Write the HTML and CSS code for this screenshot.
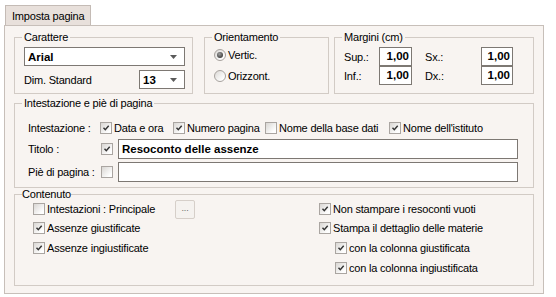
FILE: index.html
```html
<!DOCTYPE html>
<html lang="it">
<head>
<meta charset="utf-8">
<title>Imposta pagina</title>
<link rel="stylesheet" href="styles.css">
</head>
<body>
<div class="tabs"><div class="tab">Imposta pagina</div></div>
<div class="panel">
  <div class="toprow">
    <fieldset class="grp g-font">
      <legend>Carattere</legend>
      <div class="select sel-font"><span class="val">Arial</span><svg class="arrow" viewBox="0 0 7 4"><polygon points="0,0 7,0 3.5,4"/></svg></div>
      <div class="size-row">
        <span>Dim. Standard</span>
        <div class="select sel-size"><span class="val">13</span><svg class="arrow" viewBox="0 0 7 4"><polygon points="0,0 7,0 3.5,4"/></svg></div>
      </div>
    </fieldset>
    <fieldset class="grp g-orient">
      <legend>Orientamento</legend>
      <div class="radio-row r1"><span class="radio on"></span>Vertic.</div>
      <div class="radio-row r2"><span class="radio"></span>Orizzont.</div>
    </fieldset>
    <fieldset class="grp g-marg">
      <legend>Margini (cm)</legend>
      <div class="marg-grid">
        <span>Sup.:</span><div class="num">1,00</div><span class="lab2">Sx.:</span><div class="num">1,00</div>
        <span>Inf.:</span><div class="num">1,00</div><span class="lab2">Dx.:</span><div class="num">1,00</div>
      </div>
    </fieldset>
  </div>

  <fieldset class="grp g-head">
    <legend>Intestazione e piè di pagina</legend>
    <div class="head-grid">
      <div class="h-label">Intestazione :</div>
      <div class="h-opts">
        <div class="opt"><span class="cb"><svg viewBox="0 0 10 10"><path d="M2.5 4.8l1.8 2 3.4-4"/></svg></span>Data e ora</div>
        <div class="opt"><span class="cb"><svg viewBox="0 0 10 10"><path d="M2.5 4.8l1.8 2 3.4-4"/></svg></span>Numero pagina</div>
        <div class="opt"><span class="cb"></span>Nome della base dati</div>
        <div class="opt"><span class="cb"><svg viewBox="0 0 10 10"><path d="M2.5 4.8l1.8 2 3.4-4"/></svg></span>Nome dell'istituto</div>
      </div>
      <div class="h-label">Titolo :</div>
      <div class="h-field"><span class="cb"><svg viewBox="0 0 10 10"><path d="M2.5 4.8l1.8 2 3.4-4"/></svg></span><div class="textbox strong">Resoconto delle assenze</div></div>
      <div class="h-label">Piè di pagina :</div>
      <div class="h-field"><span class="cb"></span><div class="textbox"></div></div>
    </div>
  </fieldset>

  <fieldset class="grp g-content">
    <legend>Contenuto</legend>
    <div class="content-grid">
      <div class="c-item"><span class="cb"></span><span class="fixed-lab">Intestazioni : Principale</span><span class="dots">...</span></div>
      <div class="c-item"><span class="cb"><svg viewBox="0 0 10 10"><path d="M2.5 4.8l1.8 2 3.4-4"/></svg></span>Non stampare i resoconti vuoti</div>
      <div class="c-item"><span class="cb"><svg viewBox="0 0 10 10"><path d="M2.5 4.8l1.8 2 3.4-4"/></svg></span>Assenze giustificate</div>
      <div class="c-item"><span class="cb"><svg viewBox="0 0 10 10"><path d="M2.5 4.8l1.8 2 3.4-4"/></svg></span>Stampa il dettaglio delle materie</div>
      <div class="c-item"><span class="cb"><svg viewBox="0 0 10 10"><path d="M2.5 4.8l1.8 2 3.4-4"/></svg></span>Assenze ingiustificate</div>
      <div class="c-item indent"><span class="cb"><svg viewBox="0 0 10 10"><path d="M2.5 4.8l1.8 2 3.4-4"/></svg></span>con la colonna giustificata</div>
      <div class="c-item"></div>
      <div class="c-item indent"><span class="cb"><svg viewBox="0 0 10 10"><path d="M2.5 4.8l1.8 2 3.4-4"/></svg></span>con la colonna ingiustificata</div>
    </div>
  </fieldset>
</div>
</body>
</html>
```

FILE: styles.css
```css
* { box-sizing: border-box; }

body {
  margin: 0;
  background: #ffffff;
  font-family: "Liberation Sans", Arial, sans-serif;
  font-size: 11px;
  letter-spacing: -0.2px;
  color: #000;
}

.tabs {
  display: flex;
  padding: 5px 0 0 5px;
  height: 25px;
}

.tab {
  width: 86px;
  height: 20px;
  padding-left: 6px;
  display: flex;
  align-items: center;
  background: #e8e0db;
  border: 1px solid #c4bbb5;
  border-bottom: none;
}

.panel {
  margin-left: 4px;
  width: 540px;
  height: 269px;
  border: 1px solid #c7bfb9;
  background: #f8f4f1;
  padding: 5px 9px 0 9px;
}

fieldset.grp {
  margin: 0;
  padding: 0;
  min-width: 0;
  border: 1px solid #d2cbc5;
}

legend {
  padding: 0 2px;
  margin-left: -2px;
  line-height: 12px;
  height: 12px;
}

.toprow {
  display: flex;
}

.g-font {
  width: 179px;
  height: 63px;
  padding: 0 7px 0 9px !important;
}

.g-orient {
  width: 125px;
  height: 63px;
  margin-left: 11px !important;
  padding-left: 9px !important;
}

.g-marg {
  width: 200px;
  height: 63px;
  margin-left: 5px !important;
  padding-left: 9px !important;
}

/* selects */
.select {
  height: 19px;
  background: #fff;
  border: 1px solid #7d7873;
  display: flex;
  align-items: center;
  justify-content: space-between;
  padding: 0 7px 0 3px;
  font-weight: bold;
  font-size: 11.5px;
  letter-spacing: 0;
}

.arrow {
  width: 7px;
  height: 4px;
  fill: #5a5a5a;
  display: block;
}

.sel-font {
  margin-top: 4px;
}

.size-row {
  margin-top: 4px;
  display: flex;
  align-items: center;
  justify-content: space-between;
}

.sel-size {
  width: 46px;
}

/* radios */
.radio-row {
  height: 18px;
  margin-top: 3px;
  display: flex;
  align-items: center;
}

.radio {
  width: 12px;
  height: 12px;
  border-radius: 50%;
  border: 1px solid #a7a29e;
  background: linear-gradient(135deg, #dcd9d6, #fefefe 80%);
  margin-right: 2px;
  display: flex;
  align-items: center;
  justify-content: center;
  flex: none;
}

.radio.on::after {
  content: "";
  width: 6px;
  height: 6px;
  border-radius: 50%;
  background: radial-gradient(circle at 40% 35%, #a0a0a0, #454545 70%);
}

/* margins */
.marg-grid {
  margin-top: 4px;
  display: grid;
  grid-template-columns: 35px 33px 69px 32px;
  grid-template-rows: 19px 19px;
  align-items: center;
}

.lab2 {
  padding-left: 13px;
}

.num {
  height: 19px;
  background: #fff;
  border: 1px solid #7d7873;
  text-align: right;
  padding-right: 2px;
  font-weight: bold;
  font-size: 11.5px;
  letter-spacing: 0;
  line-height: 17px;
}

/* heading group */
.g-head {
  margin-top: 3px !important;
  height: 91px;
  padding-left: 13px !important;
}

.g-head legend {
  margin-left: -6px;
}

.head-grid {
  margin-top: 10px;
  display: grid;
  grid-template-columns: 72px 1fr;
  grid-template-rows: 17px 20px 20px;
  row-gap: 3px;
  align-items: center;
}

.h-opts {
  display: grid;
  grid-template-columns: 73px 92px 124px auto;
  align-items: center;
}

.opt {
  display: flex;
  align-items: center;
}

.h-field {
  display: flex;
  align-items: center;
}

.h-field .cb {
  margin-left: 1px;
  margin-right: 5px;
}

.textbox {
  width: 400px;
  height: 20px;
  background: #fff;
  border: 1px solid #7d7873;
  padding-left: 3px;
  line-height: 18px;
}

.textbox.strong {
  font-weight: bold;
  font-size: 11.5px;
  letter-spacing: 0;
}

/* checkbox */
.cb {
  width: 12px;
  height: 12px;
  flex: none;
  border: 1px solid #aaa5a1;
  background: linear-gradient(135deg, #d9d6d3, #fefefe 80%);
  margin-right: 2px;
  display: block;
}

.cb svg {
  width: 10px;
  height: 10px;
  display: block;
  fill: none;
  stroke: #333;
  stroke-width: 1.4;
}

/* content group */
.g-content {
  height: 98px;
  padding-left: 18px !important;
}

.g-content legend {
  padding: 0;
  margin-left: -11px;
}

.content-grid {
  display: grid;
  grid-template-columns: 286px 1fr;
  grid-template-rows: 18px 20px 20px 20px;
  align-items: center;
}

.c-item {
  display: flex;
  align-items: center;
}

.c-item.indent {
  padding-left: 16px;
}

.fixed-lab {
  width: 128px;
}

.dots {
  width: 20px;
  height: 19px;
  border: 1px solid #d6cfc9;
  border-radius: 2px;
  background: #f5f2ef;
  color: #6a6a6a;
  font-size: 9px;
  display: flex;
  align-items: center;
  justify-content: center;
  padding-bottom: 3px;
}
```
